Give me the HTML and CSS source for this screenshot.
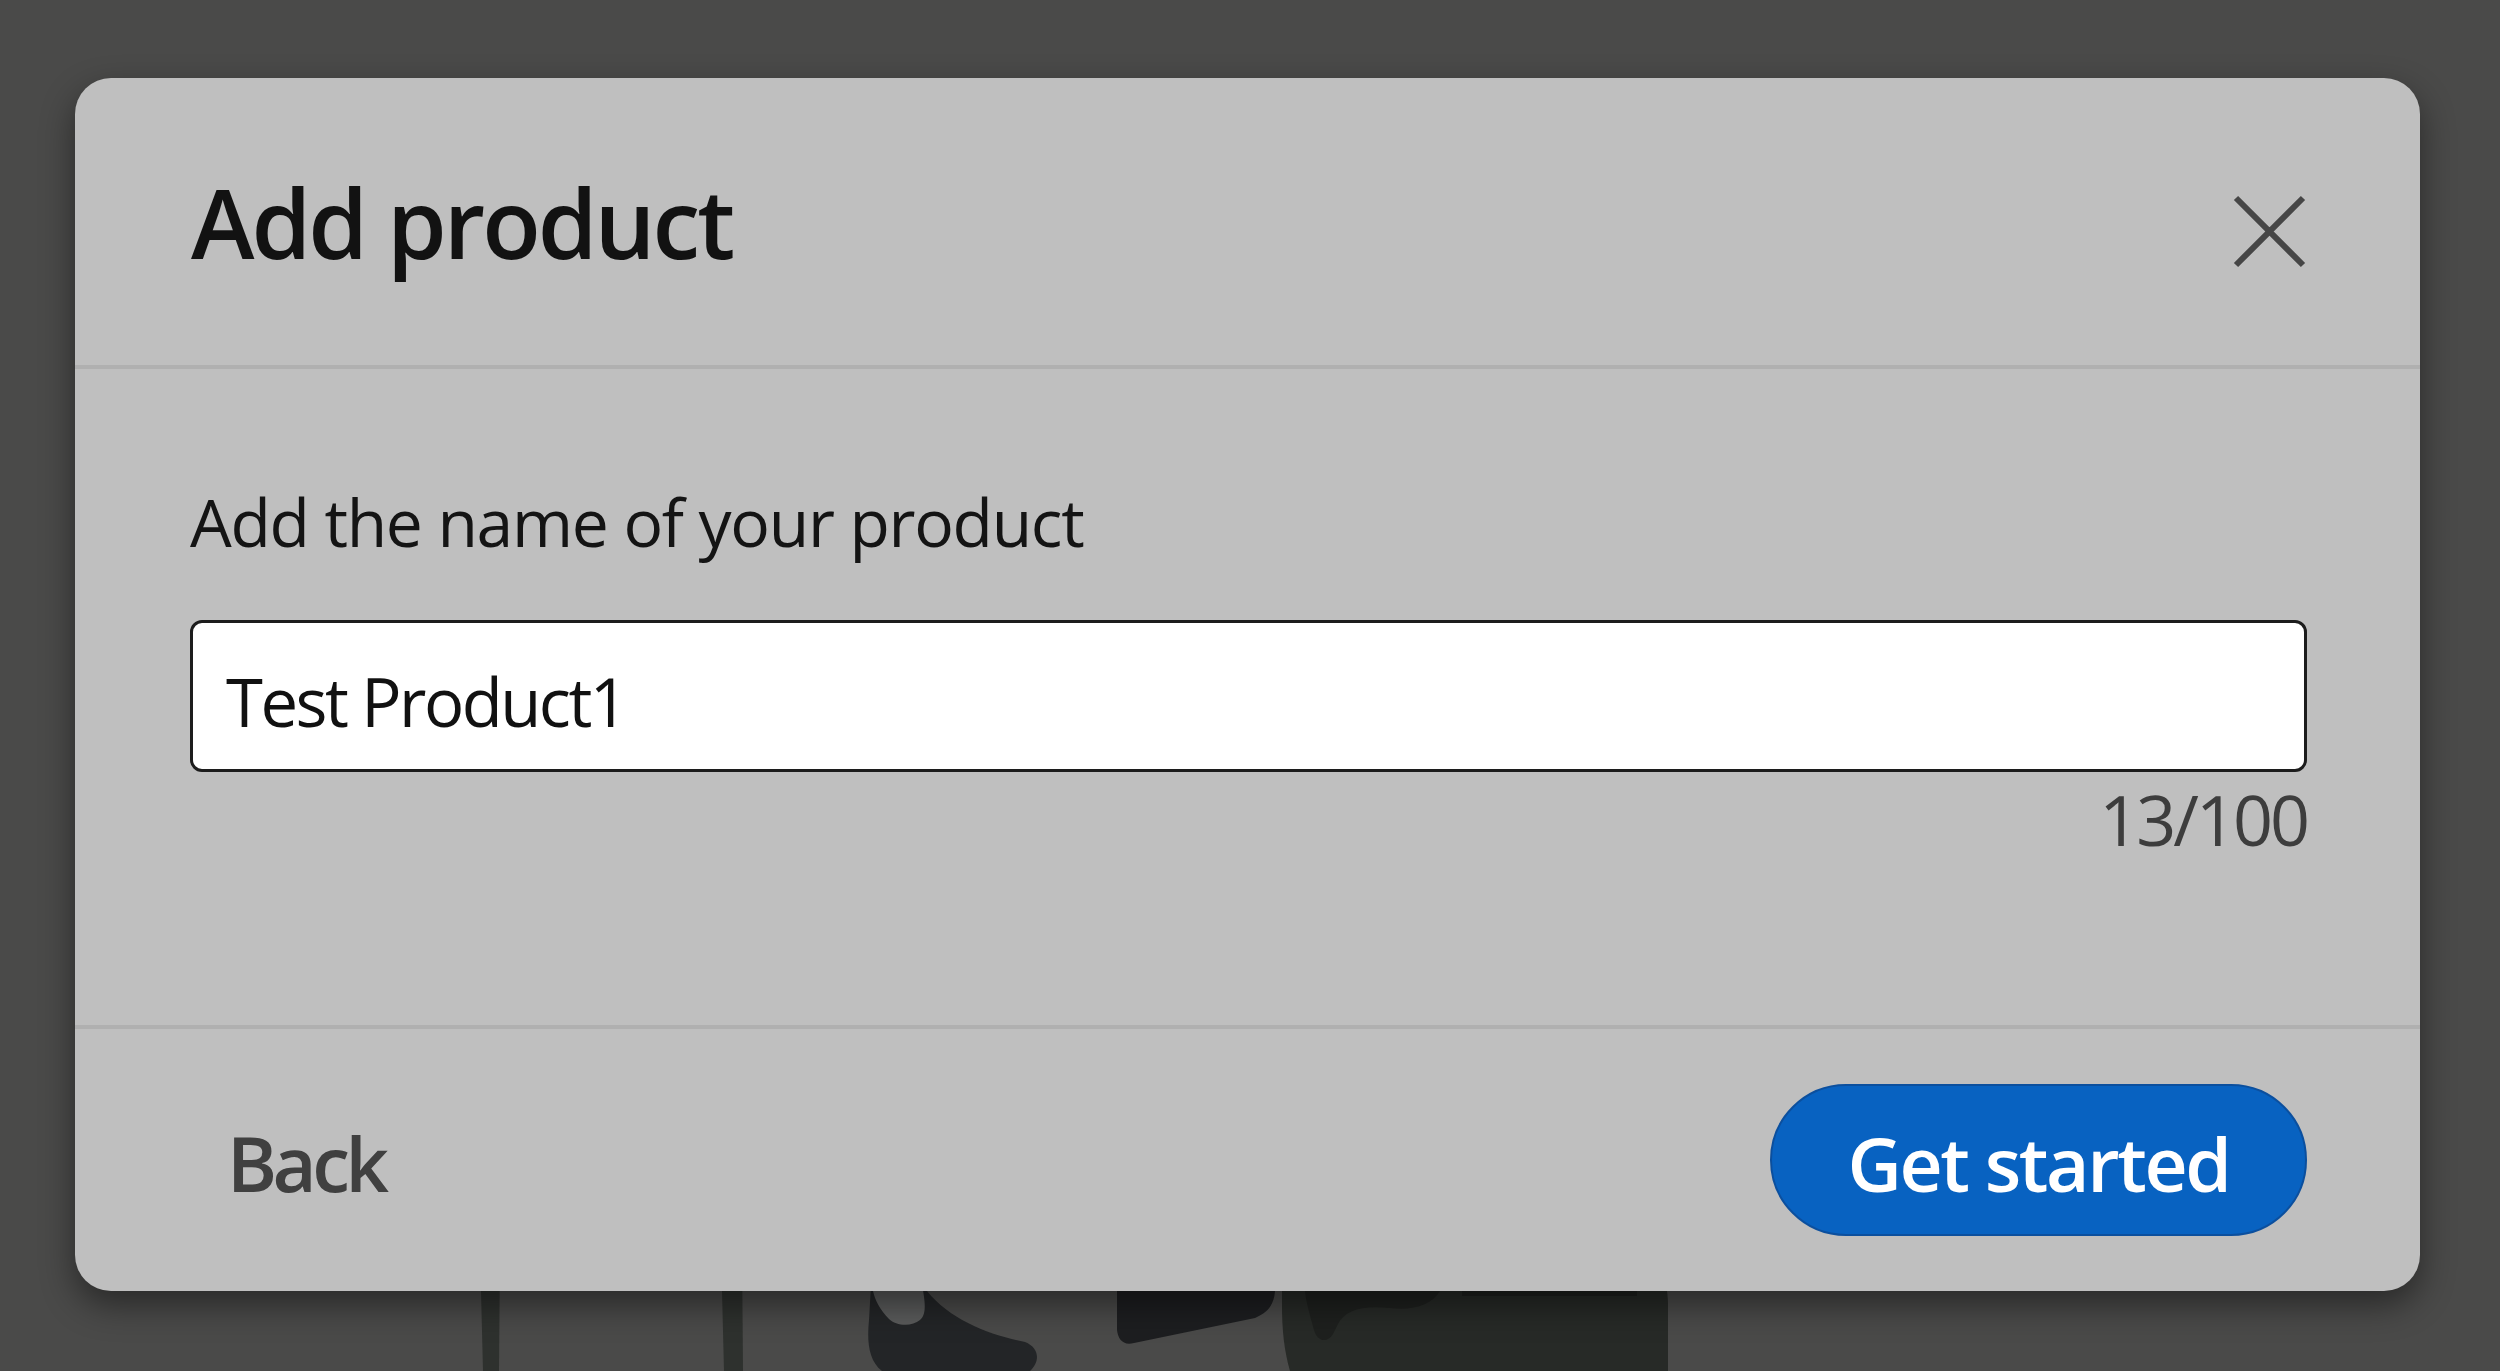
FILE: index.html
```html
<!DOCTYPE html>
<html lang="en">
<head>
<meta charset="utf-8">
<title>Add product</title>
<link rel="stylesheet" href="styles.css">
</head>
<body>
<div class="backdrop">
  <svg class="art" width="2500" height="1371" viewBox="0 0 2500 1371" aria-hidden="true">
    <path class="art-line" d="M480,1250 L500,1250 L499,1371 L483,1371 Z"/>
    <path class="art-line" d="M721,1250 L742,1250 L743,1371 L724,1371 Z"/>
    <path class="art-dark" d="M873,1250 L927,1250 L927,1291 C950,1320 990,1335 1025,1342 C1040,1348 1040,1362 1030,1371 L882,1371 C868,1360 867,1340 869,1320 Z"/>
    <path class="art-light" d="M873,1285 L922,1285 C926,1305 926,1315 920,1320 C912,1327 896,1326 889,1319 C880,1310 875,1300 873,1291 Z"/>
    <path class="art-darker" d="M1117,1250 L1275,1250 L1275,1291 C1274,1305 1268,1312 1255,1318 L1134,1343 C1123,1346 1118,1339 1117,1330 Z"/>
    <path class="art-blob" d="M1282,1250 L1630,1250 C1655,1250 1668,1275 1668,1305 L1668,1371 L1290,1371 C1284,1350 1282,1330 1282,1305 Z"/>
    <path class="art-swirl" d="M1305,1291 L1440,1291 C1432,1305 1412,1311 1390,1308 C1362,1305 1345,1310 1338,1324 L1333,1334 C1327,1344 1317,1341 1314,1330 C1310,1315 1306,1302 1305,1291 Z"/>
    <path class="art-swirl" d="M1462,1291 L1637,1291 L1637,1296 L1462,1296 Z"/>
  </svg>

  <div class="modal" role="dialog" aria-labelledby="modal-title">
    <header class="modal-head">
      <h1 id="modal-title" class="modal-title">Add product</h1>
      <button class="close-btn" type="button" aria-label="Close">
        <svg width="75" height="75" viewBox="0 0 75 75">
          <path d="M4,4 L71,71 M71,4 L4,71" stroke="#464646" stroke-width="6" fill="none" stroke-linecap="butt"/>
        </svg>
      </button>
    </header>

    <section class="modal-body">
      <label class="field-label" for="product-name">Add the name of your product</label>
      <div class="text-input" id="product-name">Test Product1</div>
      <div class="counter">13/100</div>
    </section>

    <footer class="modal-foot">
      <button class="back-btn" type="button">Back</button>
      <button class="primary-btn" type="button">Get started</button>
    </footer>
  </div>
</div>
</body>
</html>
```

FILE: styles.css
```css
html, body {
  margin: 0;
  padding: 0;
}

body {
  background: #4a4a49;
  font-family: "Open Sans", "Noto Sans", "Liberation Sans", sans-serif;
  color: #111111;
}

.backdrop {
  position: relative;
  width: 2500px;
  height: 1371px;
  box-sizing: border-box;
  padding: 78px 0 0 75px;
  overflow: hidden;
}

.art {
  position: absolute;
  left: 0;
  top: 0;
}

.art-line { fill: #2e312e; }
.art-dark { fill: #232527; }
.art-light { fill: #5a5b5b; }
.art-darker { fill: #1d1e20; }
.art-blob { fill: #272a27; }
.art-swirl { fill: #1e201e; }

.modal {
  position: relative;
  width: 2345px;
  height: 1213px;
  background: #bfbfbf;
  border-radius: 36px;
  box-shadow: 0 14px 34px rgba(0, 0, 0, 0.45);
  display: flex;
  flex-direction: column;
}

.modal-head {
  box-sizing: border-box;
  height: 291px;
  border-bottom: 4px solid #b0b0b0;
  display: flex;
  align-items: center;
  justify-content: space-between;
  padding: 0 113px 0 116px;
}

.modal-title {
  margin: 0;
  font-size: 96px;
  line-height: 1;
  font-weight: 600;
  letter-spacing: -3px;
  color: #121212;
}

.close-btn {
  margin: 19px 0 0 0;
  padding: 0;
  border: 0;
  background: transparent;
  width: 75px;
  height: 75px;
  display: block;
}

.close-btn svg {
  display: block;
}

.modal-body {
  box-sizing: border-box;
  height: 660px;
  border-bottom: 4px solid #b0b0b0;
  padding: 119px 113px 0 115px;
  display: flex;
  flex-direction: column;
}

.field-label {
  display: block;
  font-size: 66px;
  line-height: 1;
  font-weight: 400;
  letter-spacing: -1.3px;
  color: #141414;
}

.text-input {
  box-sizing: border-box;
  margin-top: 66px;
  height: 152px;
  border: 3px solid #1c1c1c;
  border-radius: 12px;
  background: #ffffff;
  display: flex;
  align-items: center;
  padding: 10px 0 0 33px;
  font-size: 67px;
  line-height: 1;
  letter-spacing: -2.5px;
  color: #111111;
}

.counter {
  margin-top: 12px;
  align-self: flex-end;
  font-size: 70px;
  line-height: 1;
  letter-spacing: -3px;
  color: #3d3d3d;
}

.modal-foot {
  flex: 1;
  display: flex;
  align-items: center;
  justify-content: space-between;
  padding: 0 113px 0 152px;
}

.back-btn {
  padding: 5px 0 0 0;
  border: 0;
  background: transparent;
  font-family: inherit;
  font-size: 76px;
  line-height: 1;
  font-weight: 600;
  letter-spacing: -4.5px;
  color: #404040;
}

.primary-btn {
  box-sizing: border-box;
  width: 537px;
  height: 152px;
  border: 2px solid #0b4f9e;
  border-radius: 76px;
  background: #0862c1;
  color: #ffffff;
  font-family: inherit;
  font-size: 75px;
  line-height: 1;
  font-weight: 600;
  letter-spacing: -2.4px;
  padding: 6px 0 0 0;
}
```
